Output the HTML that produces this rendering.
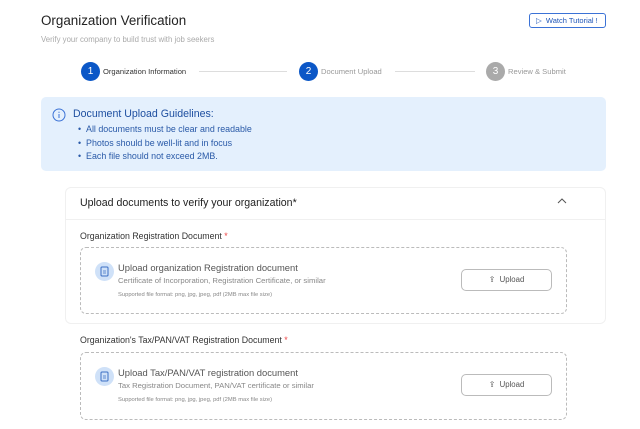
<!DOCTYPE html>
<html><head><meta charset="utf-8"><style>
*{margin:0;padding:0;box-sizing:border-box}
body{width:640px;height:429px;overflow:hidden;background:#fff;font-family:"Liberation Sans",sans-serif;position:relative;color:#333}
.a{position:absolute;white-space:nowrap}
.circ{position:absolute;width:19px;height:19px;border-radius:50%;color:#fff;font-size:10px;text-align:center;line-height:19px}
.line{position:absolute;height:1px;background:#ddd;top:71px}
.dash{position:absolute;left:80px;width:487px;border:1px dashed #bbb;border-radius:6px}
.ic{position:absolute;width:19px;height:19px;border-radius:50%;background:#cfe1f8}
.btn{position:absolute;left:461px;width:91px;height:22px;border:1px solid #bbb;border-radius:5px;font-size:7.8px;color:#555;text-align:center;line-height:20px}
</style></head><body>
<div class="a" style="left:41px;top:13px;font-size:13.4px;color:#222">Organization Verification</div>
<div class="a" style="left:41px;top:35px;font-size:7.8px;color:#aaa">Verify your company to build trust with job seekers</div>
<div class="a" style="left:529px;top:13px;width:77px;height:15px;border:1px solid #3b72d6;border-radius:3px;font-size:7.5px;color:#1e55b8;line-height:13px;padding-left:6px">▷&nbsp;&nbsp;Watch Tutorial !</div>

<div class="circ" style="left:81px;top:62px;background:#0b57c7">1</div>
<div class="a" style="left:103px;top:67px;font-size:7.6px;color:#333">Organization Information</div>
<div class="line" style="left:199px;width:88px"></div>
<div class="circ" style="left:299px;top:62px;background:#0b57c7">2</div>
<div class="a" style="left:321px;top:67px;font-size:7.6px;color:#999">Document Upload</div>
<div class="line" style="left:395px;width:80px"></div>
<div class="circ" style="left:486px;top:62px;background:#aaa">3</div>
<div class="a" style="left:508px;top:67px;font-size:7.6px;color:#999">Review &amp; Submit</div>

<div class="a" style="left:41px;top:97px;width:565px;height:74px;background:#e4f0fd;border-radius:5px"></div>
<svg class="a" style="left:52px;top:108px" width="14" height="14" viewBox="0 0 14 14"><circle cx="7" cy="7" r="6" fill="none" stroke="#3b72d6" stroke-width="1"/><line x1="7" y1="6" x2="7" y2="10" stroke="#3b72d6"/><circle cx="7" cy="4.2" r=".6" fill="#3b72d6"/></svg>
<div class="a" style="left:73px;top:108px;font-size:10.6px;color:#1e4fa0">Document Upload Guidelines:</div>
<div class="a" style="left:78px;top:123px;font-size:8.9px;color:#2a5aa8;line-height:13.5px">• &nbsp;All documents must be clear and readable<br>• &nbsp;Photos should be well-lit and in focus<br>• &nbsp;Each file should not exceed 2MB.</div>

<div class="a" style="left:65px;top:187px;width:541px;height:137px;border:1px solid #f0f0f0;border-radius:6px"></div>
<div class="a" style="left:65px;top:219px;width:541px;height:1px;background:#f0f0f0"></div>
<div class="a" style="left:80px;top:197px;font-size:10.6px;color:#222">Upload documents to verify your organization*</div>
<svg class="a" style="left:557px;top:197px" width="10" height="7" viewBox="0 0 10 7"><path d="M1 6 L5 2 L9 6" fill="none" stroke="#555" stroke-width="1"/></svg>

<div class="a" style="left:80px;top:231px;font-size:8.8px;color:#333">Organization Registration Document <span style="color:#e44">*</span></div>
<div class="dash" style="top:247px;height:67px"></div>
<div class="ic" style="left:95px;top:262px"></div>
<svg class="a" style="left:100px;top:266px" width="9" height="11" viewBox="0 0 9 11"><rect x="1" y="1" width="7" height="9" rx="1" fill="none" stroke="#3b6fc4"/><path d="M3 5h3M3 7h3" stroke="#3b6fc4" stroke-width=".8"/></svg>
<div class="a" style="left:118px;top:262px;font-size:9.4px;color:#555">Upload organization Registration document</div>
<div class="a" style="left:118px;top:276px;font-size:7.7px;color:#888">Certificate of Incorporation, Registration Certificate, or similar</div>
<div class="a" style="left:118px;top:292px;font-size:5.8px;color:#888">Supported file format: png, jpg, jpeg, pdf (2MB max file size)</div>
<div class="btn" style="top:269px">⇪&nbsp;&nbsp;Upload</div>

<div class="a" style="left:80px;top:335px;font-size:8.8px;color:#333">Organization's Tax/PAN/VAT Registration Document <span style="color:#e44">*</span></div>
<div class="dash" style="top:352px;height:68px"></div>
<div class="ic" style="left:95px;top:367px"></div>
<svg class="a" style="left:100px;top:371px" width="9" height="11" viewBox="0 0 9 11"><rect x="1" y="1" width="7" height="9" rx="1" fill="none" stroke="#3b6fc4"/><path d="M3 5h3M3 7h3" stroke="#3b6fc4" stroke-width=".8"/></svg>
<div class="a" style="left:118px;top:367px;font-size:9.4px;color:#555">Upload Tax/PAN/VAT registration document</div>
<div class="a" style="left:118px;top:381px;font-size:7.7px;color:#888">Tax Registration Document, PAN/VAT certificate or similar</div>
<div class="a" style="left:118px;top:397px;font-size:5.8px;color:#888">Supported file format: png, jpg, jpeg, pdf (2MB max file size)</div>
<div class="btn" style="top:374px">⇪&nbsp;&nbsp;Upload</div>
</body></html>
